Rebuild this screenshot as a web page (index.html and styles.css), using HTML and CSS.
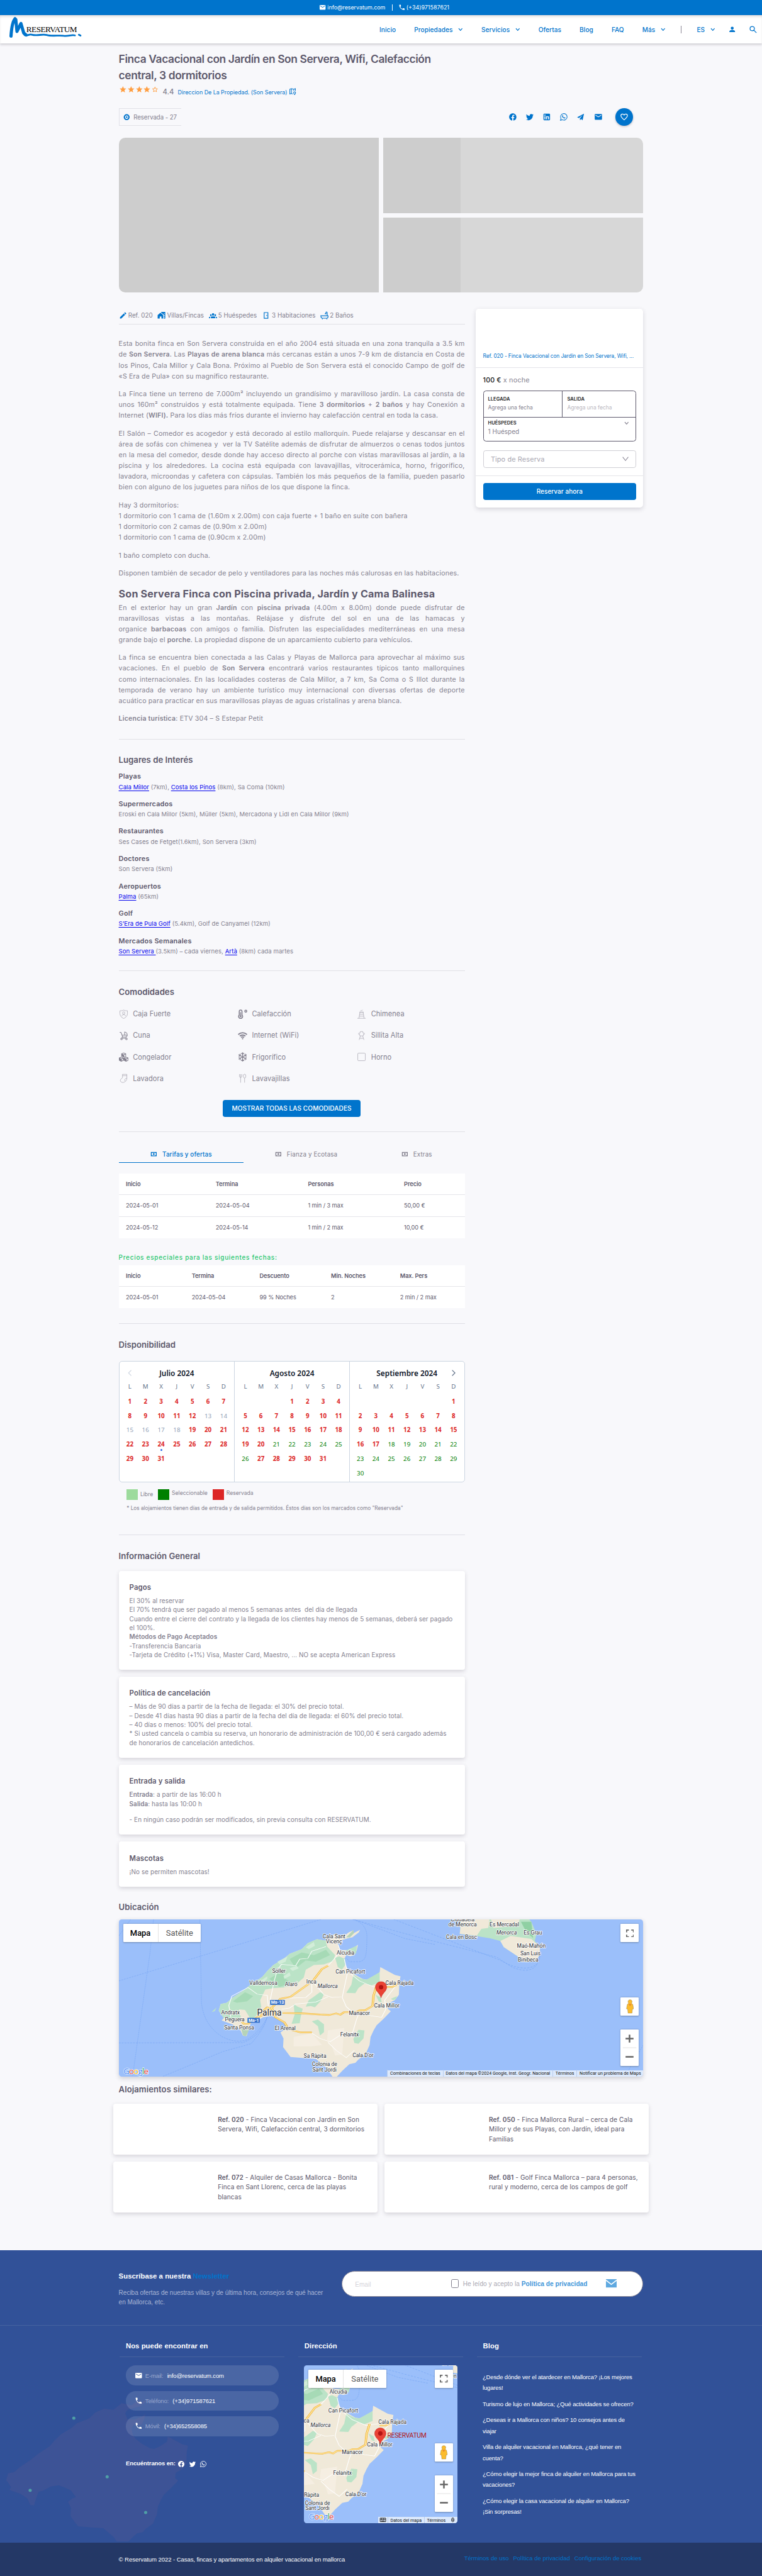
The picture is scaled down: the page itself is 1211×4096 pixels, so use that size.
FILE: index.html
```html
<!DOCTYPE html>
<html lang="es">
<head>
<meta charset="utf-8">
<title>Finca Vacacional con Jardín en Son Servera</title>
<link rel="stylesheet" href="styles.css">
</head>
<body>
<svg class="defs" width="0" height="0"><defs>
  <symbol id="mail" viewBox="0 0 24 24"><path fill="currentColor" d="M20 8L12 13L4 8V6L12 11L20 6M20 4H4C2.89 4 2 4.89 2 6V18A2 2 0 0 0 4 20H20A2 2 0 0 0 22 18V6C22 4.89 21.1 4 20 4Z"/></symbol>
  <symbol id="phone" viewBox="0 0 24 24"><path fill="currentColor" d="M6.62 10.79C8.06 13.62 10.38 15.94 13.21 17.38L15.41 15.18C15.69 14.9 16.08 14.82 16.43 14.93C17.55 15.3 18.75 15.5 20 15.5A1 1 0 0 1 21 16.5V20A1 1 0 0 1 20 21A17 17 0 0 1 3 4A1 1 0 0 1 4 3H7.5A1 1 0 0 1 8.5 4C8.5 5.25 8.7 6.45 9.07 7.57C9.18 7.92 9.1 8.31 8.82 8.59L6.62 10.79Z"/></symbol>
  <symbol id="fb" viewBox="0 0 24 24"><path fill="currentColor" d="M12 2.04C6.5 2.04 2 6.53 2 12.06C2 17.06 5.66 21.21 10.44 21.96V14.96H7.9V12.06H10.44V9.85C10.44 7.34 11.93 5.96 14.22 5.96C15.31 5.96 16.45 6.15 16.45 6.15V8.62H15.19C13.95 8.62 13.56 9.39 13.56 10.18V12.06H16.34L15.89 14.96H13.56V21.96A10 10 0 0 0 22 12.06C22 6.53 17.5 2.04 12 2.04Z"/></symbol>
  <symbol id="tw" viewBox="0 0 24 24"><path fill="currentColor" d="M22.46 6C21.69 6.35 20.86 6.58 20 6.69C20.88 6.16 21.56 5.32 21.88 4.31C21.05 4.81 20.13 5.16 19.16 5.36C18.37 4.5 17.26 4 16 4C13.65 4 11.73 5.92 11.73 8.29C11.73 8.63 11.77 8.96 11.84 9.27C8.28 9.09 5.11 7.38 3 4.79C2.63 5.42 2.42 6.16 2.42 6.94C2.42 8.43 3.17 9.75 4.33 10.5C3.62 10.5 2.96 10.3 2.38 10V10.03C2.38 12.11 3.86 13.85 5.82 14.24C5.46 14.34 5.08 14.39 4.69 14.39C4.42 14.39 4.15 14.36 3.89 14.31C4.43 16 6 17.26 7.89 17.29C6.43 18.45 4.58 19.13 2.56 19.13C2.22 19.13 1.88 19.11 1.54 19.07C3.44 20.29 5.7 21 8.12 21C16 21 20.33 14.46 20.33 8.79C20.33 8.6 20.33 8.42 20.32 8.23C21.16 7.63 21.88 6.87 22.46 6Z"/></symbol>
  <symbol id="li" viewBox="0 0 24 24"><path fill="currentColor" d="M19 3A2 2 0 0 1 21 5V19A2 2 0 0 1 19 21H5A2 2 0 0 1 3 19V5A2 2 0 0 1 5 3H19M18.5 18.5V13.2A3.26 3.26 0 0 0 15.24 9.94C14.39 9.94 13.4 10.46 12.92 11.24V10.13H10.13V18.5H12.92V13.57C12.92 12.8 13.54 12.17 14.31 12.17A1.4 1.4 0 0 1 15.71 13.57V18.5H18.5M6.88 8.56A1.68 1.68 0 0 0 8.56 6.88C8.56 5.95 7.81 5.19 6.88 5.19A1.69 1.69 0 0 0 5.19 6.88C5.19 7.81 5.95 8.56 6.88 8.56M8.27 18.5V10.13H5.5V18.5H8.27Z"/></symbol>
  <symbol id="wa" viewBox="0 0 24 24"><path fill="none" stroke="currentColor" stroke-width="1.800" d="M3 21l1.400-4.700A9 9 0 1 1 7.800 19.700Z"/><path fill="currentColor" d="M8.500 7.300c.4-.4 1-.3 1.200.1l.8 1.800c.1.300 0 .5-.8 1.400.8 1.500 1.900 2.500 3.500 3.200.9-1 .9-1.200 1.300-1l1.900.9c.5.3 0 1.700-.7 2.100-1.200.7-2.700.3-4.500-.7-2-1.200-3.600-3.400-3.700-4.900 0-1.300.3-2.300 1-2.900Z"/></symbol>
  <symbol id="tg" viewBox="0 0 24 24"><path fill="currentColor" d="M21 3L2 13l5 2.200L17 7l-7.500 9.500L10 21l3-3.200 4 3.200z"/></symbol>
  <symbol id="heart" viewBox="0 0 24 24"><path fill="none" stroke="currentColor" stroke-width="2" d="M12 20C6 14.600 3 12 3 8.500A4.500 4.500 0 0 1 7.500 4C9.300 4 11 5 12 6.700C13 5 14.700 4 16.500 4A4.500 4.500 0 0 1 21 8.500C21 12 18 14.600 12 20Z"/></symbol>
  <symbol id="chev" viewBox="0 0 12 12"><path fill="none" stroke="currentColor" stroke-width="1.900" d="M1.500 3.500L6 8.500l4.500-5"/></symbol>
  <symbol id="user" viewBox="0 0 24 24"><path fill="currentColor" d="M12 3a5 5 0 0 1 0 10a5 5 0 0 1 0-10M2.500 21v-2c0-3 5-4.500 9.500-4.500s9.500 1.500 9.500 4.500v2z"/></symbol>
  <symbol id="search" viewBox="0 0 24 24"><path fill="none" stroke="currentColor" stroke-width="2.200" d="M15.500 9.500a6 6 0 1 1-12 0a6 6 0 0 1 12 0M14 14l7 7"/></symbol>
  <symbol id="star" viewBox="0 0 24 24"><path fill="currentColor" d="M12 17.270L18.180 21l-1.640-7.030L22 9.240l-7.190-.61L12 2 9.190 8.630 2 9.240l5.460 4.730L5.820 21z"/></symbol>
  <symbol id="staro" viewBox="0 0 24 24"><path fill="none" stroke="currentColor" stroke-width="1.900" d="M12 16.200L16.700 19l-1.300-5.300L19.500 10l-5.400-.5L12 4.500 9.900 9.500 4.500 10l4.100 3.700L7.300 19z"/></symbol>
  <symbol id="eye" viewBox="0 0 24 24"><path fill="currentColor" fill-rule="evenodd" d="M12 3a9 9 0 1 1 0 18a9 9 0 0 1 0-18M12 6.500c-2.800 0-5 2.500-5 5.500s2.200 5.500 5 5.500 5-2.500 5-5.500-2.200-5.500-5-5.500M12 9.500a2.500 2.500 0 1 1 0 5a2.500 2.500 0 0 1 0-5"/></symbol>
  <symbol id="cash" viewBox="0 0 24 24"><path fill="currentColor" fill-rule="evenodd" d="M1 4H23V20H1ZM6 7A3 3 0 0 1 4 9V15A3 3 0 0 1 6 17H18A3 3 0 0 1 20 15V9A3 3 0 0 1 18 7ZM12 8.500a3.500 3.500 0 1 1 0 7a3.500 3.500 0 0 1 0-7"/></symbol>

  <g id="island"><path d="M1228 108L1222 128 1190 165 1170 172 1130 190 1118 215 1130 262 1165 262 1200 240 1218 222 1212 262 1200 300 1180 308 1160 300 1150 330 1155 375 1170 410 1200 445 1240 480 1260 485 1290 465 1310 445 1325 430 1328 390 1370 425 1400 450 1428 460 1422 510 1420 600 1400 640 1368 665 1365 705 1380 725 1345 780 1310 830 1295 870 1280 920 1275 980 1255 1050 1220 1090 1205 1115 1175 1125 1140 1175 1110 1225 1095 1225 1060 1150 1010 1085 960 1080 925 1075 885 1070 865 1030 848 995 850 930 835 885 860 858 875 850 850 800 815 775 790 760 750 770 715 800 690 810 680 850 668 912 650 910 635 860 600 825 565 805 545 795 555 775 530 720 540 670 570 660 600 620 650 570 690 520 745 465 770 420 800 375 850 330 880 290 940 255 970 210 1015 180 1060 190 1100 140 1150 155 1170 130 1195 112 1196 135Z"/></g>

  <g id="mallorca">
    <rect x="-200" y="-100" width="1800" height="600" fill="#9bbffa"/>
    <g transform="translate(-19 -10) scale(.5102 .33333)">
      <use href="#island" fill="#f0e9d9"/>
      <g fill="#bbe3c7">
        <path d="M530 720L540 670 570 660 600 620 650 570 690 520 745 465 770 420 800 375 850 330 880 290 940 255 970 210 1015 180 1060 190 1065 235 1105 300 1095 345 1050 370 1000 375 960 410 950 470 920 510 850 545 800 550 760 560 735 640 740 690 715 760 690 790 660 715 630 710 640 770 600 790 555 775Z"/>
        <path d="M1105 320l20-10 30 20-2 50-15 30-20-20zM1160 585l25-60 10-75 40 30 25 5 65-55v75l-40 25-35-15-30 35-15 38zM1158 265l45-30 10-5-5 60-20-20-25 10zM900 670l20 20 25 15-10 60-5 50-40 5 15-70zM960 690l15-50 20-20 35-40 20 15-15 50-30 50-20-10zM990 800l30-12 30 35v60l-20 25-10-70zM1195 935l25-70 30 5-5 60-25 40-20-5zM1305 600l25 20 5 40-15-10zM1380 630l30-20-5 25-15 5zM495 730l25-35-10 30z"/>
        <path fill="#b5d3b9" d="M1160 165l35-55 3 25-20 30zM640 850l40 15-15 48-15-5z"/>
      </g>
      <g fill="#a6dab6"><path d="M600 650l60-70 40 30-30 40-50 10zM780 480l60-60 20 60 30 30-60 30zM880 330l60-50 60 20 60-40 20 40-70 50-50-10-50 60z"/></g>
      <g fill="#d3edd9"><path d="M820 350l50-40-10 40-30 20zM880 400l35-20 10 20-30 20zM960 240l40-40 5 30-30 25zM740 490l30-30 0 20-25 30zM850 460l30-30 5 25-30 25z"/></g>
      <g fill="#f5eee2"><path d="M900 920l90-30 50 90-50 10-90 0zM1070 870l80-20-10 200-35 10-20-90-20-30z"/></g>
      <g fill="none" stroke="#fff" stroke-width="3.500">
        <path d="M1060 235l-50 25-20 10-20 55-40 5-20 50-70-10-20 40-15 80-25 180M1120 220l10 50-30 60-30 50M1150 330l15 90 60 75 70 45 80-20M1165 440l-25 180 20 70 30 40M990 500v80l-30 40-80 5M1000 510l50 90 40 20 45-5M840 710l40-10 30-30 100-15 60-40M1420 500l-70 140 5 70-20 60-50-10-60-30-15 60-25 130M990 890l40 40 50 25 50-50 60-20M1070 960l40 60 50 55 40-55M590 770l-10-90 15-70 80-65 45 50 50 10 5 80"/>
      </g>
      <g fill="none" stroke-linejoin="round">
        <path stroke="#f0ae2e" stroke-width="11" d="M645 805l10 15h20l45-50 20-10 15-45 15-20 15 15 50-80 50-15 110-120 45-90 30-25M790 690l20 80 45 40 20 50 60 25h55M845 738l90 2 140 13 35-12 20 10 20-20h60l15-13 30-2 35-32 5-80 15-75M1360 540h30l25-22"/>
        <path stroke="#ffe69a" stroke-width="6" d="M645 805l10 15h20l45-50 20-10 15-45 15-20 15 15 50-80 50-15 110-120 45-90 30-25M790 690l20 80 45 40 20 50 60 25h55M845 738l90 2 140 13 35-12 20 10 20-20h60l15-13 30-2 35-32 5-80 15-75M1360 540h30l25-22"/>
      </g>
      <g fill="none" stroke="#77a6f5" stroke-width="2.500" stroke-dasharray="9 5">
        <path d="M37 495L440 308 1035 30M95 30L37 155M208 30L190 290 105 1215M437 30L445 660C455 800 500 870 545 915 600 960 640 955 670 940 720 890 750 830 770 770M37 964L650 962C720 920 750 850 770 770M255 1217L550 1030 690 970C740 880 760 830 768 770M1195 30C1250 60 1263 110 1262 170 1260 300 1260 345 1220 350H1175L1160 320M1200 30L1450 175 1600 220"/>
      </g>
    </g>
    <g transform="translate(-19 -40) scale(.8673 .5102)">
      <path fill="#bbe3c7" d="M1010 60L1014 120 1012 150 1060 160 1100 172 1130 185 1140 215 1180 260 1205 290 1235 280 1245 250 1245 215 1230 185 1235 150 1220 90 1205 60Z"/>
      <path fill="#f0e9d9" d="M1010 60L1014 120 1012 150 1062 158 1075 125 1095 120 1100 60ZM1130 185L1140 215 1180 260 1205 290 1235 280 1245 250 1245 215 1220 175 1160 160ZM1100 60l10 60 70-10 10-50z"/>
      <path fill="#8fd0a3" d="M1190 90l30 0 5 80-20-30z"/>
      <path fill="none" stroke="#77a6f5" stroke-width="1.600" stroke-dasharray="6 4" d="M700 78L900 170 1120 265 1160 310C1200 345 1245 340 1245 240M820 78L1130 280C1180 330 1240 340 1245 260M1545 700L1500 830"/>
    </g>
    <g class="mt">
      <text x="542" y="47.500">Cala Sant</text><text x="542" y="60.500">Vicenç</text><text x="571" y="89.500">Alcudia</text><text x="583" y="137">Can Picafort</text><text x="403" y="135">Sóller</text><text x="364" y="165.500">Valldemosa</text><text x="434" y="167.500">Alaró</text><text x="485" y="162.500">Inca</text><text x="526" y="173.500" font-style="italic">Mallorca</text><text x="707" y="165.500">Cala Rajada</text><text x="675" y="222.500">Cala Millor</text><text x="606" y="241.500">Manacor</text><text x="281" y="239">Andratx</text><text x="292" y="257">Peguera</text><text x="303" y="277">Santa Ponsa</text><text x="419" y="279">El Arenal</text><text x="581" y="294.500">Felanitx</text><text x="494" y="349">Sa Ràpita</text><text x="615" y="347">Cala D'or</text><text x="518" y="369.500">Colonia de</text><text x="518" y="383">Sant Jordi</text>
      <text x="866" y="5">Ciudadela</text><text x="866" y="17.500">de Menorca</text><text x="971" y="17">Es Mercadal</text><text x="977" y="37.500" font-style="italic">Menorca</text><text x="1043" y="37.500">Es Grau</text><text x="863" y="49.500">Cala en Bosc</text><text x="1039" y="71">Maó-Mahón</text><text x="1037" y="90.500">San Luis</text><text x="1031" y="107">Binibeca</text>
      <text x="379" y="242" font-size="22">Palma</text>
    </g>
    <g><rect x="381" y="203" width="37" height="12.500" fill="#3471cb"/><rect x="324" y="248" width="31" height="12.500" fill="#3471cb"/><text class="sh" x="399.500" y="213">Ma-13</text><text class="sh" x="339.500" y="258.500">Ma-1</text></g>
  </g>
  <symbol id="pin" viewBox="0 0 30 42"><path fill="#ea4335" stroke="#c5221f" stroke-width="1" d="M15 41.500C13 31 .8 25 .8 14.800a14.200 14.200 0 0 1 28.400 0C29.200 25 17 31 15 41.500Z"/><circle cx="15" cy="14.800" r="5.600" fill="#b31412"/></symbol>
  <symbol id="pegman" viewBox="0 0 20 36"><path fill="#fbbc2d" stroke="#7a6a3a" stroke-width=".6" d="M10 1a5 5 0 0 1 3.500 8.700L17 13l2 11-3 1-1 10H5L4 25l-3-1 2-11 3.500-3.300A5 5 0 0 1 10 1Z"/><path fill="#e8862a" d="M6 12h8l-4 5z"/></symbol>
  <symbol id="full" viewBox="0 0 20 20"><path fill="none" stroke="#666" stroke-width="2.800" d="M1.400 7V1.400H7M13 1.400h5.600V7M18.600 13v5.600H13M7 18.600H1.400V13"/></symbol>
</defs></svg>

<div class="page">
  <div class="topbar"><svg class="i18"><use href="#mail"/></svg><span>info@reservatum.com</span><i></i><svg class="i18"><use href="#phone"/></svg><span>(+34)971587621</span></div>
  <header class="header">
    <svg class="logo" viewBox="24 42 186 60"><g fill="none" stroke="#0074cc" stroke-linecap="round" stroke-linejoin="round"><path stroke-width="8" d="M28 92C29 75 32 55 38 48L40 50 43 80 53 60 60 84 66 89"/><path stroke-width="4.500" d="M62 89C70 93 72 86 80 88 95 92 105 86 118 89 130 93 150 89 160 91 175 93 180 87 189 90M199 88.500l4 2"/></g><text x="66.500" y="82" textLength="128" font-family="Liberation Serif" font-size="21" fill="#000">RESERVATUM</text></svg>
    <nav class="nav">
      <a>Inicio</a><a>Propiedades<svg class="chev"><use href="#chev"/></svg></a><a>Servicios<svg class="chev"><use href="#chev"/></svg></a><a>Ofertas</a><a>Blog</a><a>FAQ</a><a>Más<svg class="chev"><use href="#chev"/></svg></a><i></i><a>ES<svg class="chev"><use href="#chev"/></svg></a><svg class="i18 us"><use href="#user"/></svg><svg class="sr"><use href="#search"/></svg>
    </nav>
  </header>

  <div class="wrap">
    <h1>Finca Vacacional con Jardín en Son Servera, Wifi, Calefacción<br>central, 3 dormitorios</h1>
    <div class="rating"><span class="stars"><svg><use href="#star"/></svg><svg><use href="#star"/></svg><svg><use href="#star"/></svg><svg><use href="#star"/></svg><svg><use href="#staro"/></svg></span><b>4.4</b><a>Direccion De La Propiedad. (Son Servera)</a><svg class="mi" viewBox="0 0 18 18"><path fill="none" stroke="#0074cc" stroke-width="1.600" d="M8 15l-3-1.500-4 1.500V3l4-1.500L11 3l4-1.500V7M5 1.500V13M11 3v4M13 9.500a2.500 2.500 0 0 1 2.500 2.500c0 2-2.500 4.500-2.500 4.500S10.500 14 10.500 12A2.500 2.500 0 0 1 13 9.500"/></svg></div>
    <div class="actions">
      <div class="resv"><svg class="i20"><use href="#eye"/></svg><span>Reservada - 27</span></div>
      <div class="share"><svg><use href="#fb"/></svg><svg><use href="#tw"/></svg><svg><use href="#li"/></svg><svg><use href="#wa"/></svg><svg><use href="#tg"/></svg><svg><use href="#mail"/></svg><span class="fav"><svg><use href="#heart"/></svg></span></div>
    </div>
    <div class="gallery"><div class="big"></div><div class="small"><div></div><div></div></div></div>

    <div class="cols">
      <main>
        <div class="facts">
          <span><svg viewBox="0 0 24 24"><path d="M20.710 7.040c.39-.39.39-1.040 0-1.410l-2.340-2.340c-.37-.39-1.020-.39-1.410 0l-1.840 1.830 3.750 3.750M3 17.250V21h3.750L17.810 9.930l-3.750-3.750z"/></svg>Ref. 020</span>
          <span><svg viewBox="0 0 24 24"><path fill-rule="evenodd" d="M1 11l8-7 8 7v10h-5v-6H7v6H1zM11 2h12v19h-4V10l-8-6.500zM19 6v2h2V6zm0 5v2h2v-2zm0 5v2h2v-2z"/></svg>Villas/Fincas</span>
          <span><svg viewBox="0 0 24 24"><path d="M12 5.500a3.500 3.500 0 0 1 0 7a3.500 3.500 0 0 1 0-7M5 8a2.500 2.500 0 0 1 2.300 3.500c.2 1 .6 1.700 1.200 2.200A3 3 0 1 1 5 8m14 0a3 3 0 1 1-3.500 5.700c.6-.5 1-1.200 1.200-2.200A2.500 2.500 0 0 1 19 8M5.500 18.300c0-2.100 2.900-3.800 6.500-3.800s6.500 1.700 6.500 3.800V20h-13zM0 20v-1.500c0-1.400 1.900-2.600 4.500-3-.6.700-1 1.700-1 2.800V20zm24 0h-3.500v-1.700c0-1.100-.4-2.100-1-2.800 2.600.4 4.500 1.600 4.500 3z"/></svg>5 Huéspedes</span>
          <span><svg class="dr" viewBox="0 0 14 24"><path fill="none" stroke="#0074cc" stroke-width="2.200" d="M1.500 20.500v-17h11v17zM9 10.500v3"/></svg>3 Habitaciones</span>
          <span><svg viewBox="0 0 24 24"><path fill="none" stroke="#0074cc" stroke-width="2" d="M1.500 13h21v2c0 3-2 5-4.500 5H6.500C4 20 2 18 2 15zM6 20v3M19 20v3M20 13V4a2 2 0 0 0-4 0v2M13 7h5"/></svg>2 Baños</span>
        </div>
        <hr class="h0">
        <div class="text t1">
          <p><span>Esta bonita finca en Son Servera construida en el año 2004 está situada en una zona tranquila a 3.5 km</span><span>de <b>Son Servera</b>. Las <b>Playas de arena blanca</b> más cercanas están a unos 7-9 km de distancia en Costa de</span><span>los Pinos, Cala Millor y Cala Bona. Próximo al Pueblo de Son Servera está el conocido Campo de golf de</span><span>«S Era de Pula» con su magnífico restaurante.</span></p>
          <p><span>La Finca tiene un terreno de 7.000m² incluyendo un grandísimo y maravilloso jardín. La casa consta de</span><span>unos 160m² construidos y está totalmente equipada. Tiene <b>3 dormitorios</b> + <b>2 baños</b> y hay Conexión a</span><span>Internet (<b>WIFI).</b> Para los días más fríos durante el invierno hay calefacción central en toda la casa.</span></p>
          <p><span>El Salón – Comedor es acogedor y está decorado al estilo mallorquín. Puede relajarse y descansar en el</span><span>área de sofás con chimenea y&nbsp; ver la TV Satélite además de disfrutar de almuerzos o cenas todos juntos</span><span>en la mesa del comedor, desde donde hay acceso directo al porche con vistas maravillosas al jardín, a la</span><span>piscina y los alrededores. La cocina está equipada con lavavajillas, vitrocerámica, horno, frigorífico,</span><span>lavadora, microondas y cafetera con cápsulas. También los más pequeños de la familia, pueden pasarlo</span><span>bien con alguno de los juguetes para niños de los que dispone la finca.</span></p>
          <p class="l"><span>Hay 3 dormitorios:</span><span>1 dormitorio con 1 cama de (1.60m x 2.00m) con caja fuerte + 1 baño en suite con bañera</span><span>1 dormitorio con 2 camas de (0.90m x 2.00m)</span><span>1 dormitorio con 1 cama de (0.90cm x 2.00m)</span></p>
          <p><span>1 baño completo con ducha.</span></p>
          <p><span>Disponen también de secador de pelo y ventiladores para las noches más calurosas en las habitaciones.</span></p>
        </div>
        <h2>Son Servera Finca con Piscina privada, Jardín y Cama Balinesa</h2>
        <div class="text">
          <p><span>En el exterior hay un gran <b>Jardín</b> con <b>piscina privada</b> (4.00m x 8.00m) donde puede disfrutar de</span><span>maravillosas vistas a las montañas. Relájase y disfrute del sol en una de las hamacas y</span><span>organice <b>barbacoas</b> con amigos o familia. Disfruten las especialidades mediterráneas en una mesa</span><span>grande bajo el <b>porche</b>. La propiedad dispone de un aparcamiento cubierto para vehículos.</span></p>
          <p><span>La finca se encuentra bien conectada a las Calas y Playas de Mallorca para aprovechar al máximo sus</span><span>vacaciones. En el pueblo de <b>Son Servera</b> encontrará varios restaurantes típicos tanto mallorquines</span><span>como internacionales. En las localidades costeras de Cala Millor, a 7 km, Sa Coma o S Illot durante la</span><span>temporada de verano hay un ambiente turístico muy internacional con diversas ofertas de deporte</span><span>acuático para practicar en sus maravillosas playas de aguas cristalinas y arena blanca.</span></p>
          <p><span><b>Licencia turística</b>: ETV 304 – S Estepar Petit</span></p>
        </div>
        <hr class="h1">
        <h3 class="m36">Lugares de Interés</h3>
        <div class="places">
          <div><h4>Playas</h4><p><a>Cala Millor</a> (7km), <a>Costa los Pinos</a> (8km), Sa Coma (10km)</p></div>
          <div><h4>Supermercados</h4><p>Eroski en Cala Millor (5km), Müller (5km), Mercadona y Lidl en Cala Millor (9km)</p></div>
          <div><h4>Restaurantes</h4><p>Ses Cases de Fetget(1.6km), Son Servera (3km)</p></div>
          <div><h4>Doctores</h4><p>Son Servera (5km)</p></div>
          <div><h4>Aeropuertos</h4><p><a>Palma</a> (65km)</p></div>
          <div><h4>Golf</h4><p><a>S’Era de Pula Golf</a> (5.4km), Golf de Canyamel (12km)</p></div>
          <div><h4>Mercados Semanales</h4><p><a>Son Servera </a>(3.5km) – cada viernes, <a>Artà</a> (8km) cada martes</p></div>
        </div>
        <hr class="h2">
        <h3 class="m36">Comodidades</h3>
        <div class="amen">
          <span><svg viewBox="0 0 24 24"><path class="th" d="M12 1.500c3 2 6 2 9.500 2v7c0 6-4 10-9.500 12.500C6.500 20.500 2.500 16.500 2.500 10.500v-7c3.500 0 6.500 0 9.500-2M12 6a2.700 3 0 0 1 0 6.500A2.700 3 0 0 1 12 6M7.500 17c0-5 9-5 9 0"/></svg>Caja Fuerte</span>
          <span><svg viewBox="0 0 24 24"><path fill="none" stroke="currentColor" stroke-width="2.600" d="M3.600 14V5a3.400 3.400 0 0 1 6.800 0v9a5 5 0 1 1-6.800 0Z"/><path stroke="currentColor" stroke-width="2" d="M7 7v10"/><circle cx="7" cy="17.500" r="2.300" fill="currentColor"/><circle cx="20" cy="4.500" r="2.500" fill="none" stroke="currentColor" stroke-width="2.400"/></svg>Calefacción</span>
          <span><svg viewBox="0 0 24 24"><path class="th" d="M1.500 22.500h21M5.500 22.500L8 7h8l2.500 15.500M6.500 7h11M7.200 12h9.600M6.400 17h11.200M9 4c2-2 4 0 6-2.500"/></svg>Chimenea</span>
          <span><svg viewBox="0 0 24 24"><path class="md" d="M2 4h3l3 7h13c0-5-3-8-6.500-8v8M8 11c0 4 2 5 5 5s8-1 8-5M9 15l-2 4M17 15l2 4M4.500 20.500a2 2 0 1 0 4 0a2 2 0 1 0-4 0M17 20.500a2 2 0 1 0 4 0a2 2 0 1 0-4 0M9 19h8"/></svg>Cuna</span>
          <span><svg viewBox="0 0 24 24"><path fill="none" stroke="currentColor" stroke-width="3" d="M1 9.500c6.500-6 15.500-6 22 0M5 13.500c4-3.800 10-3.800 14 0M8.500 17c2-2 5-2 7 0"/><circle cx="12" cy="20" r="1.800" fill="currentColor"/></svg>Internet (WiFi)</span>
          <span><svg viewBox="0 0 24 24"><path class="th" d="M9 2h6l1 4h3v3h-2l-1 4H8L7 9H5V6h3zM9 13L6 23M15 13l3 10M7.500 19h9"/></svg>Sillita Alta</span>
          <span><svg viewBox="0 0 24 24"><path fill="currentColor" d="M12 1l6 2.500v7L12 13l-6-2.500v-7zM6 11.500l6 2.700v7L6 24 0 21v-7zM18 11.500l6 2.500v7l-6 3-6-2.800v-7z"/><path fill="#f8f8fb" d="M12 2.800l3.500 1.500L12 5.800 8.500 4.300zM13 7.500l3.500-1.500v3.500L13 11zM6 13.300l3.500 1.500L6 16.300l-3.500-1.500zM7 18l3.500-1.500V20L7 21.500zM18 13.300l3.500 1.500-3.500 1.500-3.500-1.500zM19 18l3.500-1.500V20L19 21.500z"/></svg>Congelador</span>
          <span><svg viewBox="0 0 24 24"><path fill="none" stroke="currentColor" stroke-width="2" d="M12 .5v23M2 6.200l20 11.600M22 6.200L2 17.800M8.500 2.500L12 5.500l3.500-3M8.500 21.500l3.500-3 3.500 3M2 10.500l4.500-1.600L5.500 4M22 13.500l-4.500 1.600 1 4.900M22 10.500l-4.500-1.600 1-4.900M2 13.500l4.500 1.600L5.500 20"/></svg>Frigorífico</span>
          <span><svg viewBox="0 0 24 24"><rect class="th" x="2.500" y="2.500" width="19" height="19" rx="2"/></svg>Horno</span>
          <span><svg viewBox="0 0 24 24"><path class="th" d="M9 2h11v11c0 5-6 9.500-10 9.500-6 0-8-5-5-8.500l4-3.500zM9 5.500h11M20 12c-6 0-6 5-4 7.500"/></svg>Lavadora</span>
          <span><svg viewBox="0 0 24 24"><path class="th" d="M4 1.500v6c0 3 6 3 6 0v-6M7 1.500V23M17 11.500V23M17 1.500a3 4.800 0 0 1 0 10a3 4.800 0 0 1 0-10"/></svg>Lavavajillas</span>
        </div>
        <button class="more">MOSTRAR TODAS LAS COMODIDADES</button>
        <hr class="h3">
        <div class="tabs"><span class="on"><svg><use href="#cash"/></svg>Tarifas y ofertas</span><span><svg><use href="#cash"/></svg>Fianza y Ecotasa</span><span><svg><use href="#cash"/></svg>Extras</span></div>
        <div class="table a">
          <b>Inicio</b><b>Termina</b><b>Personas</b><b>Precio</b>
          <span>2024-05-01</span><span>2024-05-04</span><span>1 min / 3 max</span><span>50,00 €</span>
          <span>2024-05-12</span><span>2024-05-14</span><span>1 min / 2 max</span><span>10,00 €</span>
        </div>
        <div class="special">Precios especiales para las siguientes fechas:</div>
        <div class="table b">
          <b>Inicio</b><b>Termina</b><b>Descuento</b><b>Min. Noches</b><b>Max. Pers</b>
          <span>2024-05-01</span><span>2024-05-04</span><span>99 % Noches</span><span>2</span><span>2 min / 2 max</span>
        </div>
        <hr class="h4">
        <h3 class="m37">Disponibilidad</h3>
        <div class="cal" id="cal"></div>
        <div class="legend"><i class="lf"></i><span class="lo">Libre</span><i class="ls"></i><span>Seleccionable</span><i class="lr"></i><span>Reservada</span></div>
        <div class="note">* Los alojamientos tienen días de entrada y de salida permitidos. Éstos días son los marcados como "Reservada"</div>
        <hr class="h5">
        <h3 class="m38">Información General</h3>
        <div class="infos">
          <section class="c1"><h5>Pagos</h5>El 30% al reservar<br>El 70% tendrá que ser pagado al menos 5 semanas antes&nbsp; del día de llegada<br>Cuando entre el cierre del contrato y la llegada de los clientes hay menos de 5 semanas, deberá ser pagado<br>el 100%.<br><b>Métodos de Pago Aceptados</b><br>-Transferencia Bancaria<br>-Tarjeta de Crédito (+1%) Visa, Master Card, Maestro, … NO se acepta American Express</section>
          <section class="c2"><h5>Política de cancelación</h5>– Más de 90 días a partir de la fecha de llegada: el 30% del precio total.<br>– Desde 41 días hasta 90 días a partir de la fecha del día de llegada: el 60% del precio total.<br>– 40 días o menos: 100% del precio total.<br>* Si usted cancela o cambia su reserva, un honorario de administración de 100,00 € será cargado además<br>de honorarios de cancelación antedichos.</section>
          <section class="c3"><h5>Entrada y salida</h5><b>Entrada</b>: a partir de las 16:00 h<br><b>Salida</b>: hasta las 10:00 h<p>- En ningún caso podrán ser modificados, sin previa consulta con RESERVATUM.</p></section>
          <section class="c4"><h5>Mascotas</h5>¡No se permiten mascotas!</section>
        </div>
      </main>
      <aside>
        <div class="ref">Ref. 020 - Finca Vacacional con Jardín en Son Servera, Wifi, ...</div>
        <div class="price"><b>100 €</b> x noche</div>
        <div class="dates">
          <div class="dd"><div><b>LLEGADA</b><span>Agrega una fecha</span></div><div><b>SALIDA</b><span class="pl">Agrega una fecha</span></div></div>
          <div class="gu"><div><b>HUÉSPEDES</b><span>1 Huésped</span></div><svg class="chev"><use href="#chev"/></svg></div>
        </div>
        <div class="tipo"><span>Tipo de Reserva</span><svg viewBox="0 0 16 12"><path fill="none" stroke="#8a8796" stroke-width="1.600" d="M1 1l7 9 7-9"/></svg></div>
        <div class="bt"><button>Reservar ahora</button></div>
      </aside>
    </div>

    <h3 class="ubi">Ubicación</h3>
    <div class="map">
      <svg class="canvas" width="1322" height="396"><use href="#mallorca"/><use href="#pin" x="645.500" y="156" width="30" height="42"/></svg>
      <div class="mtype"><b>Mapa</b><span>Satélite</span></div>
      <div class="ctl fs"><svg width="20" height="20"><use href="#full"/></svg></div>
      <div class="ctl pg"><svg width="20" height="36"><use href="#pegman"/></svg></div>
      <div class="ctl zm"><svg width="46" height="92" viewBox="0 0 46 92"><path stroke="#666" stroke-width="4" d="M13 23h20M23 13v20M13 69h20"/><path stroke="#e0e0e0" stroke-width="1.500" d="M6 46h34"/></svg></div>
      <div class="ggl"><i>G</i><i>o</i><i>o</i><i>g</i><i>l</i><i>e</i></div>
      <div class="attr"><span>Combinaciones de teclas</span><span>Datos del mapa ©2024 Google, Inst. Geogr. Nacional</span><span>Términos</span><span>Notificar un problema de Maps</span></div>
    </div>
    <h3 class="alo">Alojamientos similares:</h3>
    <div class="sims">
      <div><b>Ref. 020</b> - Finca Vacacional con Jardín en Son<br>Servera, Wifi, Calefacción central, 3 dormitorios</div>
      <div><b>Ref. 050</b> - Finca Mallorca Rural – cerca de Cala<br>Millor y de sus Playas, con Jardín, ideal para<br>Familias</div>
      <div><b>Ref. 072</b> - Alquiler de Casas Mallorca - Bonita<br>Finca en Sant Llorenc, cerca de las playas<br>blancas</div>
      <div><b>Ref. 081</b> - Golf Finca Mallorca – para 4 personas,<br>rural y moderno, cerca de los campos de golf</div>
    </div>
  </div>

  <footer>
    <div class="news">
      <div class="nt"><h6>Suscríbase a nuestra <em>Newsletter</em></h6><p>Reciba ofertas de nuestras villas y de última hora, consejos de qué hacer<br>en Mallorca, etc.</p></div>
      <div class="field"><span class="em">Email</span><i></i><span class="ac">He leído y acepto la <b>Política de privacidad</b></span><svg viewBox="2 4 20 16" preserveAspectRatio="none"><path fill="#5fa9e0" d="M2 4H22V20H2Z"/><path fill="none" stroke="#fff" stroke-width="2" d="M2 6l10 8 10-8"/></svg></div>
    </div>
    <div class="foot">
      <svg class="shape" viewBox="0 0 480 360"><g transform="translate(-255 -35) scale(.5102 .33333)" fill="#3d5396"><use href="#island"/></g><g fill="#4f9fa6"><circle cx="186" cy="49" r="4"/><circle cx="270" cy="197" r="4"/><circle cx="76" cy="231" r="4"/><circle cx="367" cy="287" r="4"/></g></svg>
      <div class="col">
        <h6>Nos puede encontrar en</h6>
        <div class="pill"><svg class="i20"><use href="#mail"/></svg><span>E-mail:</span>info@reservatum.com</div>
        <div class="pill"><svg class="i20"><use href="#phone"/></svg><span>Teléfono:</span>(+34)971587621</div>
        <div class="pill"><svg class="i20"><use href="#phone"/></svg><span>Móvil:</span>(+34)652558085</div>
        <div class="soc">Encuéntranos en:<svg><use href="#fb"/></svg><svg><use href="#tw"/></svg><svg><use href="#wa"/></svg></div>
      </div>
      <div class="col">
        <h6>Dirección</h6>
        <div class="map fm">
          <svg class="canvas" width="387" height="398"><g transform="translate(-484 -18)"><use href="#mallorca"/></g><use href="#pin" x="177.500" y="157" width="30" height="42"/><text x="210" y="183" textLength="99" font-family="Roboto" font-size="16.500" fill="#b31412">RESERVATUM</text></svg>
          <div class="mtype"><b>Mapa</b><span>Satélite</span></div>
          <div class="ctl fs"><svg width="20" height="20"><use href="#full"/></svg></div>
          <div class="ctl pg"><svg width="20" height="36"><use href="#pegman"/></svg></div>
          <div class="ctl zm"><svg width="46" height="92" viewBox="0 0 46 92"><path stroke="#666" stroke-width="4" d="M13 23h20M23 13v20M13 69h20"/><path stroke="#e0e0e0" stroke-width="1.500" d="M6 46h34"/></svg></div>
          <div class="ggl"><i>G</i><i>o</i><i>o</i><i>g</i><i>l</i><i>e</i></div>
          <div class="attr"><svg width="23" height="12" viewBox="0 0 23 12"><path fill="none" stroke="#222" stroke-width="1.500" d="M5 1.500h14v9H5zM5 5h14M9 1.500v5M14 1.500v5M8 8.500h8"/></svg><span>Datos del mapa</span><span>Términos</span><svg width="24" height="12" viewBox="0 0 24 12"><path fill="none" stroke="#222" stroke-width="1.300" d="M9 3h6v6l-3 2-3-2zM11 5v4M13 5v4M10 1h4"/></svg></div>
        </div>
      </div>
      <div class="col">
        <h6>Blog</h6>
        <div class="blog"><p>¿Desde dónde ver el atardecer en Mallorca? ¡Los mejores<br>lugares!</p><p>Turismo de lujo en Mallorca; ¿Qué actividades se ofrecen?</p><p>¿Deseas ir a Mallorca con niños? 10 consejos antes de<br>viajar</p><p>Villa de alquiler vacacional en Mallorca, ¿qué tener en<br>cuenta?</p><p>¿Cómo elegir la mejor finca de alquiler en Mallorca para tus<br>vacaciones?</p><p>¿Cómo elegir la casa vacacional de alquiler en Mallorca?<br>¡Sin sorpresas!</p></div>
      </div>
    </div>
    <div class="legal"><span>© Reservatum 2022 - Casas, fincas y apartamentos en alquiler vacacional en mallorca</span><div><a>Términos de uso</a><a>Política de privacidad</a><a>Configuración de cookies</a></div></div>
  </footer>
</div>
<script src="script.js"></script>
</body>
</html>
```
FILE: script.js
```js
// Each month: heading, weekday offset of day 1 (Monday = 0), length, past days, selectable days.
const months = [
  { name: 'Julio 2024', offset: 0, days: 31, past: [13, 18], open: [] },
  { name: 'Agosto 2024', offset: 3, days: 31, past: [], open: [21, 26] },
  { name: 'Septiembre 2024', offset: 6, days: 30, past: [], open: [18, 30] },
];
const inside = (range, day) => range.length && day >= range[0] && day <= range[1];

document.getElementById('cal').innerHTML = months.map((m, index) => {
  let cells = '<span></span>'.repeat(m.offset);
  for (let d = 1; d <= m.days; d++) {
    const kind = inside(m.past, d) ? 'past' : inside(m.open, d) ? 'open' : 'taken';
    cells += `<span class="${kind}${index === 0 && d === 24 ? ' today' : ''}">${d}</span>`;
  }
  const prev = index === 0 ? '<svg viewBox="0 0 10 16"><path d="M9 1L2 8l7 7"/></svg>' : '<i></i>';
  const next = index === 2 ? '<svg class="nx" viewBox="0 0 10 16"><path d="M1 1l7 7-7 7"/></svg>' : '<i></i>';
  const week = [...'LMXJVSD'].map((l) => `<span>${l}</span>`).join('');
  return `<div class="month"><div class="mh">${prev}<b>${m.name}</b>${next}</div><div class="wk">${week}</div><div class="ds">${cells}</div></div>`;
}).join('');
```
FILE: styles.css
```css
* { box-sizing: border-box; }
body { margin: 0; background: #f8f8fb; }
.defs { position: absolute; }
.page { zoom: .63073; width: 1920px; height: 6494px; overflow: hidden; background: #f8f8fb; font-family: Inter, "Liberation Sans", sans-serif; font-size: 15.5px; color: #84818f; }
h1, h2, h3, h4, h5, h6, p { margin: 0; font-weight: 600; }
p { font-weight: 400; }
hr { border: 0; height: 1px; background: #e0e0e6; margin: 0; }
i { font-style: normal; }
svg { flex: none; display: block; }
b { font-weight: 600; }
button { border: 0; background: #0074cc; color: #fff; font-family: inherit; border-radius: 6px; padding: 0; display: block; }
.i18 { width: 18px; height: 18px; }
.i20 { width: 20px; height: 20px; }

.topbar { height: 38px; background: #0074cc; color: #fff; display: flex; align-items: center; padding-left: 804px; font-size: 14.2px; white-space: nowrap; }
.topbar span:nth-of-type(1) { margin-left: 3px; width: 162px; letter-spacing: -.1px; }
.topbar span:nth-of-type(2) { margin-left: 3px; }
.topbar i { width: 1px; height: 15px; background: #fff; margin-right: 15px; }
.header { height: 72px; background: #fff; box-shadow: 0 3px 6px rgba(47,43,61,.22), inset 0 6px 8px -4px rgba(47,43,61,.25); display: flex; align-items: center; justify-content: space-between; padding-left: 24px; padding-right: 12px; }
.logo { width: 186px; height: 60px; margin-top: -4px; }
.nav { display: flex; align-items: center; gap: 46px; color: #0074cc; font-weight: 500; font-size: 16px; }
.nav a { display: flex; align-items: center; letter-spacing: .12px; }
.nav i { width: 1px; height: 19px; background: #8b8894; margin: 0 -6px 0 -8px; }
.chev { width: 12px; height: 12px; margin-left: 14px; }
.us { margin-left: -12px; }
.sr { width: 22px; height: 22px; margin-left: -14px; }

.wrap { width: 1322px; margin-left: 299px; }
h1 { padding-top: 19px; font-size: 27.6px; line-height: 41px; height: 101px; color: #5d596c; white-space: nowrap; letter-spacing: -.63px; }
.rating { height: 40px; display: flex; align-items: center; white-space: nowrap; }
.stars { display: flex; color: #ff9f43; margin: -10px 9px 0 1px; }
.stars svg { width: 20.2px; height: 20px; }
.rating b { font-size: 18px; font-weight: 500; width: 38px; color: #84818f; letter-spacing: -.1px; }
.rating a { font-size: 14.2px; color: #0074cc; width: 282px; letter-spacing: -.07px; padding-top: 3px; }
.mi { width: 18px; height: 18px; }
.actions { margin-top: 22px; height: 44px; display: flex; justify-content: space-between; }
.resv { width: 157px; border: 1px solid #e2e2e8; border-right: 0; display: flex; align-items: center; padding-left: 8px; gap: 8px; color: #84818f; font-size: 15.3px; letter-spacing: -.08px; white-space: nowrap; }
.resv svg { color: #0074cc; }
.share { display: flex; align-items: center; gap: 21px; color: #0074cc; margin-right: 26px; }
.share svg { width: 22px; height: 22px; }
.fav { width: 44px; height: 44px; border-radius: 50%; background: #0074cc; color: #fff; display: grid; place-items: center; margin-left: 12px; box-shadow: 0 2px 5px rgba(47,43,61,.3); }
.gallery { margin-top: 31px; height: 390px; display: flex; gap: 10px; border-radius: 16px; overflow: hidden; }
.big { width: 656px; background: #cdcdcd; }
.small { flex: 1; display: flex; flex-direction: column; gap: 10px; }
.small div { flex: 1; background: linear-gradient(90deg, #cdcdcd 195px, #d7d7d7 195px); }

.cols { display: flex; justify-content: space-between; align-items: flex-start; height: 4020px; }
main { width: 872px; padding-top: 42px; }
.facts { height: 30px; display: flex; align-items: center; white-space: nowrap; gap: 12px; font-size: 15.5px; letter-spacing: .05px; }
.facts span { display: flex; align-items: center; gap: 3px; }
.facts svg { width: 21px; height: 21px; fill: #0074cc; }
.facts .dr { width: 12px; margin: 0 5px 0 6px; }
.h0 { margin: 6px 0 0; }
.text { line-height: 27.2px; letter-spacing: .3px; font-size: 16.8px; white-space: nowrap; }
.text p { margin-bottom: 17.7px; }
.text p:last-child { margin-bottom: 0; }
.text span { display: block; text-align: justify; text-align-last: justify; }
.text p span:last-child, .text .l span { text-align-last: left; }
.t1 { padding-top: 36.5px; }
h2 { margin-top: 19.5px; height: 40px; line-height: 40px; font-size: 25.6px; font-weight: 700; color: #5d596c; white-space: nowrap; letter-spacing: .28px; }
.h1 { margin-top: 37px; }
h3 { height: 30px; line-height: 32px; font-size: 20.9px; color: #5d596c; white-space: nowrap; }
.m36 { margin-top: 36.500px; }
.places { padding-top: 15.700px; }
.places div { height: 69.1px; }
h4 { height: 26px; line-height: 25px; font-size: 17.2px; color: #5d596c; letter-spacing: .3px; }
.places p { height: 24px; line-height: 25px; font-size: 15.2px; white-space: nowrap; letter-spacing: .1px; }
.places a { color: #0000ee; text-decoration: underline; text-underline-offset: 3px; }
.h2 { margin-top: 17px; }
.amen { margin-top: 15px; display: grid; grid-template-columns: 300px 300px 1fr; grid-auto-rows: 54.300px; }
.amen span { display: flex; align-items: center; gap: 12px; font-size: 17.5px; letter-spacing: .08px; white-space: nowrap; }
.amen svg { width: 24px; height: 24px; }
.th { fill: none; stroke: #a3a1ac; stroke-width: 1.100; }
.md { fill: none; stroke: #84818f; stroke-width: 1.600; }
.more { width: 348px; height: 43px; margin: 27px auto 0; font-size: 16px; font-weight: 500; letter-spacing: .11px; }
.h3 { margin-top: 36px; }
.tabs { margin-top: 35px; display: grid; grid-template-columns: 315px 315px 242px; height: 44px; letter-spacing: .2px; font-size: 15.6px; }
.tabs span { display: flex; align-items: center; justify-content: center; gap: 13px; border-bottom: 2.500px solid transparent; }
.tabs svg { width: 17px; height: 16px; }
.tabs .on { color: #0074cc; border-color: #0074cc; font-weight: 500; }
.table { margin-top: 27px; background: #fff; display: grid; grid-auto-rows: 54.300px; align-items: center; color: #5d596c; font-size: 14.6px; white-space: nowrap; letter-spacing: -.1px; }
.table > * { height: 54.300px; line-height: 55px; border-bottom: 1px solid #e6e6ea; padding-left: 18px; margin-left: -18px; }
.a { grid-template-columns: 244.500px 232.500px 242px 153px; }
.b { grid-template-columns: 184px 171px 180px 174px 163px; margin-top: 8px; }
.table > :first-child { margin-left: 0; }
.a > :nth-child(4n+1), .b > :nth-child(5n+1) { margin-left: 0; }
.a > :nth-last-child(-n+4), .b > :nth-last-child(-n+5) { border: 0; }
.special { margin-top: 36px; height: 24px; line-height: 24px; color: #28c76f; font-weight: 500; font-size: 15.8px; letter-spacing: 1.160px; white-space: nowrap; }
.h4 { margin-top: 37px; }
.m37 { margin-top: 37px; }
.cal { margin-top: 28px; height: 306px; background: #fff; border: 1px solid #cbd5e1; border-radius: 8px; display: grid; grid-template-columns: 1fr 1fr 1fr; font-family: "Noto Sans", sans-serif; overflow: hidden; }
.month { padding: 9px 7px 0; }
.month + .month { border-left: 1px solid #cbd5e1; }
.mh { height: 40px; display: flex; align-items: center; justify-content: space-between; color: #0f172a; font-size: 18.8px; padding: 0 14px; }
.mh i, .mh svg { width: 10px; height: 16px; }
.mh b { white-space: nowrap; font-weight: 600; }
.mh path { fill: none; stroke: #d3dae4; stroke-width: 2; }
.mh .nx path { stroke: #64748b; }
.wk, .ds { display: grid; grid-template-columns: repeat(7, 1fr); text-align: center; }
.wk { height: 30px; line-height: 30px; color: #64748b; font-size: 15.500px; }
.ds { margin-top: 3px; grid-auto-rows: 36.200px; line-height: 36.200px; font-size: 15.600px; }
.past { color: #94a3b8; }
.open { color: #008000; }
.taken { color: #dc2626; font-weight: 700; }
.today { position: relative; }
.today::after { content: ""; position: absolute; left: 50%; bottom: 1.500px; width: 5px; height: 5px; margin-left: -2.500px; border-radius: 50%; background: #2563eb; }
.legend { margin-top: 17px; height: 28px; display: flex; padding-left: 20px; font-size: 13.700px; letter-spacing: -.05px; line-height: 21px; }
.legend i { width: 28.500px; height: 28px; margin-right: 6px; }
.legend .lo { padding-top: 4px; }
.legend span { margin-right: 13px; }
.lf { background: #9ddb9d; } .ls { background: #008000; } .lr { background: #dc2626; }
.note { margin-top: 10px; height: 20px; line-height: 20px; padding-left: 20px; white-space: nowrap; font-size: 13.200px; letter-spacing: -.05px; }
.h5 { margin-top: 56px; }
.m38 { margin-top: 38px; }
.infos { margin-top: 23px; display: flex; flex-direction: column; gap: 18px; }
.infos section { background: #fff; border-radius: 6px; box-shadow: 0 4px 10px rgba(47,43,61,.16); padding: 29px 27px 0; line-height: 22.700px; font-size: 15.700px; white-space: nowrap; letter-spacing: .14px; }
h5 { height: 35px; line-height: 26px; font-size: 18px; color: #5d596c; letter-spacing: .18px; }
.c1 { height: 249px; } .c2 { height: 204px; } .c3 { height: 176px; } .c4 { height: 113px; }
.c3 p { margin-top: 18px; }

aside { width: 423px; height: 501px; margin-top: 40px; background: #fff; border-radius: 8px; box-shadow: 0 4px 12px rgba(47,43,61,.16); white-space: nowrap; }
.ref { height: 149px; padding: 109px 0 0 19px; line-height: 24px; font-size: 13.200px; letter-spacing: -.17px; color: #0074cc; border-bottom: 1px solid #e4e4e9; }
.price { padding: 18px 0 0 19px; line-height: 28px; height: 58px; font-size: 17.200px; letter-spacing: .3px; }
.price b { color: #111; font-size: 17px; font-weight: 500; letter-spacing: .2px; }
.dates { margin: 0 18px 0 19px; height: 128px; border: 1px solid #5d596c; border-radius: 7px; font-size: 13.500px; }
.dates b { display: block; color: #222; font-size: 11.900px; line-height: 20px; letter-spacing: .1px; }
.dates span { display: block; line-height: 22px; }
.dates .pl { color: #b9b7c0; }
.dd { display: flex; height: 66px; border-bottom: 1px solid #5d596c; }
.dd div { flex: 0 0 198px; padding: 10px 0 0 11px; }
.dd span { margin-top: 2px; }
.dd div + div { flex: 1; border-left: 1px solid #5d596c; }
.gu { padding: 5px 16px 0 11px; display: flex; justify-content: space-between; }
.gu span { font-size: 15.800px; letter-spacing: .1px; }
.gu .chev { margin-top: 4px; }
.tipo { margin: 22px 18px 0 19px; height: 44px; border: 1px solid #d0cfd5; border-radius: 6px; display: flex; align-items: center; justify-content: space-between; padding: 0 18px; color: #a9a7b2; font-size: 17.400px; letter-spacing: .13px; }
.tipo svg { width: 16px; height: 12px; }
.bt { margin-top: 20px; border-top: 1px solid #e4e4e9; padding: 17px 19px; }
.bt button { width: 386px; height: 43px; font-size: 15.800px; font-weight: 500; letter-spacing: .1px; }

.ubi { margin-top: 33.600px; }
.map { position: relative; margin-top: 18px; height: 396px; border-radius: 7px; overflow: hidden; font-family: Roboto, sans-serif; }
.cols ~ .map { box-shadow: 0 4px 12px rgba(47,43,61,.2); }
.mt { font-family: Roboto, sans-serif; font-size: 13.500px; text-anchor: middle; fill: #26292e; stroke: #fff; stroke-width: 2.500px; paint-order: stroke; }
.sh { font-family: Roboto, sans-serif; font-size: 11px; font-weight: 700; text-anchor: middle; fill: #fff; }
.mtype { position: absolute; left: 11px; top: 11px; height: 46px; display: flex; background: #fff; border-radius: 2px; box-shadow: 0 1px 4px rgba(0,0,0,.3); font-size: 20.500px; line-height: 46px; text-align: center; color: #565656; }
.mtype b { width: 89px; color: #000; font-weight: 500; border-right: 1px solid #e3e3e3; }
.mtype span { width: 107px; }
.ctl { position: absolute; right: 11px; width: 46px; height: 46px; background: #fff; border-radius: 2px; box-shadow: 0 1px 4px rgba(0,0,0,.3); display: grid; place-items: center; }
.fs { top: 11px; } .pg { top: 196px; } .zm { top: 277px; height: 92px; }
.ggl { position: absolute; left: 12px; top: 368px; font-family: "Open Sans", sans-serif; font-weight: 500; font-size: 21px; line-height: 26px; letter-spacing: -1.200px; color: #4285f4; -webkit-text-stroke: 2px #fff; paint-order: stroke fill; }
.ggl i:nth-child(2), .ggl i:nth-child(6) { color: #ea4335; } .ggl i:nth-child(3) { color: #fbbc05; } .ggl i:nth-child(5) { color: #34a853; }
.attr { position: absolute; right: 0; bottom: 0; height: 16px; line-height: 18px; background: rgba(232,240,252,.85); display: flex; align-items: center; font-size: 11.300px; color: #111; white-space: nowrap; }
.attr span { padding: 0 6px; border-left: 1px solid #b9cdee; }
.alo { margin-top: 15px; font-size: 20.800px; letter-spacing: .1px; }
.sims { margin: 23px -13px 0 -14px; display: grid; grid-template-columns: 666px 666px; justify-content: space-between; gap: 18px 0; }
.sims div { height: 128px; background: #fff; border-radius: 6px; box-shadow: 0 4px 10px rgba(47,43,61,.16); padding: 28px 0 0 264px; line-height: 24.500px; white-space: nowrap; color: #5d596c; font-size: 16px; letter-spacing: .14px; }

footer { margin-top: 95px; background: #315198; color: #fff; height: 821px; font-family: "Liberation Sans", Arial, sans-serif; }
.news { height: 191px; border-bottom: 1px solid #46639f; padding: 52px 299px 0; display: flex; justify-content: space-between; white-space: nowrap; }
h6 { font-size: 18px; font-weight: 700; line-height: 26px; letter-spacing: .05px; }
h6 em { font-style: normal; color: #0074cc; }
.nt p { margin-top: 17px; font-size: 16px; line-height: 24px; color: #a9b6d5; letter-spacing: -.05px; }
.field { width: 760px; height: 65px; background: #fff; border: 1px solid #8a8796; border-radius: 33px; display: flex; align-items: center; color: #a9a7b2; padding-left: 32px; font-size: 16px; }
.em { width: 242px; color: #d5d4da; padding-top: 4px; }
.field i { width: 20px; height: 21px; border: 1px solid #84818f; border-radius: 4px; margin-right: 10px; }
.ac { width: 360px; letter-spacing: .08px; }
.ac b { color: #4196d9; }
.field svg { width: 27px; height: 21px; }
.foot { height: 546px; padding: 0 299px 0 302px; display: flex; gap: 35px; position: relative; }
.col { width: 415px; position: relative; }
.col h6 { margin: 0; height: 79px; padding: 37px 0 0 15px; border-bottom: 1px solid #46639f; }
.shape { position: absolute; left: 0; top: 183px; width: 480px; height: 360px; }
.pill { margin: 28px 0 0 15px; width: 386px; height: 50px; border-radius: 25px; background: rgba(255,255,255,.12); display: flex; align-items: center; padding-left: 22px; font-size: 15px; letter-spacing: -.2px; color: #fff; }
.col .pill:nth-child(2) { margin-top: 21px; }
.pill + .pill { margin-top: 14px; }
.pill span { color: #9aa8ce; margin: 0 10px 0 7px; }
.soc { margin: 57px 0 0 15px; height: 22px; display: flex; align-items: center; font-weight: 700; font-size: 15px; letter-spacing: -.1px; }
.soc svg { width: 19px; height: 19px; margin: 4px 0 0 9px; }
.soc svg:first-child { margin-left: 5px; }
.fm { margin: 21px 0 0 14px; width: 387px; height: 398px; }
.blog { padding: 36px 0 0 14px; font-size: 15px; line-height: 27.300px; white-space: nowrap; letter-spacing: -.19px; }
.blog p { margin-bottom: 13.500px; }
.legal { height: 84px; background: #243866; padding: 0 304px 0 299px; display: flex; justify-content: space-between; align-items: center; font-size: 15.200px; letter-spacing: -.14px; white-space: nowrap; }
.legal div { display: flex; gap: 11px; color: #0074cc; font-size: 15px; letter-spacing: .03px; padding-bottom: 4px; }
```
